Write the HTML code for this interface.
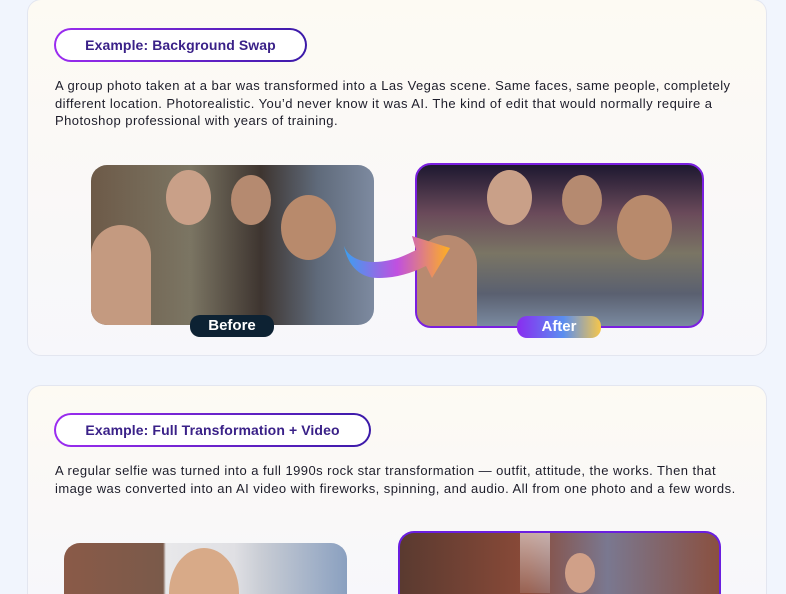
<!DOCTYPE html>
<html><head><meta charset="utf-8"><style>
*{margin:0;padding:0;box-sizing:border-box}
html,body{width:786px;height:594px;overflow:hidden}
body{background:#f1f5fd;font-family:"Liberation Sans",sans-serif;position:relative}
.card{position:absolute;left:27px;width:740px;background:linear-gradient(180deg,#fdfaf3,#f7f7fb);border:1px solid #e3e6f0;border-radius:14px}
.pill{position:absolute;left:26px;height:34px;border-radius:17px;padding:2px;background:linear-gradient(90deg,#9b2cf0,#3b1aa8)}
.pill span{display:block;height:30px;border-radius:15px;background:#fff;color:#3a2188;font-weight:bold;font-size:14px;line-height:30px;text-align:center;letter-spacing:0.1px}
.p{position:absolute;left:27px;font-size:13px;line-height:17.5px;color:#1d1d2a;letter-spacing:0.45px}
.ph{position:absolute;border-radius:16px;overflow:hidden}
.lab{position:absolute;height:22px;border-radius:10px;color:#fff;font-weight:bold;font-size:15px;line-height:22px;text-align:center}
</style></head><body>
<div class="card" style="top:-1px;height:357px">
 <div class="pill" style="top:28px;width:253px"><span>Example: Background Swap</span></div>
 <div class="p" style="top:77px;width:700px">A group photo taken at a bar was transformed into a Las Vegas scene. Same faces, same people, completely different location. Photorealistic. You’d never know it was AI. The kind of edit that would normally require a Photoshop professional with years of training.</div>
</div>
<div class="ph" style="left:91px;top:165px;width:283px;height:160px;background:linear-gradient(90deg,#6d5a48,#7b7563 35%,#3e3530 60%,#5f6a7a 80%,#7d8aa0)">
 <div style="position:absolute;left:0;top:60px;width:60px;height:100px;background:#c49a80;border-radius:30px 30px 0 0"></div>
 <div style="position:absolute;left:75px;top:5px;width:45px;height:55px;background:#c9a088;border-radius:50%"></div>
 <div style="position:absolute;left:140px;top:10px;width:40px;height:50px;background:#b58a70;border-radius:50%"></div>
 <div style="position:absolute;left:190px;top:30px;width:55px;height:65px;background:#b88a6c;border-radius:50%"></div>
</div>
<div class="lab" style="left:190px;top:315px;width:84px;background:#0d2233">Before</div>
<div class="ph" style="left:415px;top:163px;width:289px;height:165px;border:2px solid #7a1fe0;background:linear-gradient(180deg,#1d1830 0%,#6a4a5a 30%,#7a7564 55%,#5a6070 80%,#7a8aa0)">
 <div style="position:absolute;left:0;top:70px;width:60px;height:100px;background:#b88a70;border-radius:30px 30px 0 0"></div>
 <div style="position:absolute;left:70px;top:5px;width:45px;height:55px;background:#c9a088;border-radius:50%"></div>
 <div style="position:absolute;left:145px;top:10px;width:40px;height:50px;background:#b58a70;border-radius:50%"></div>
 <div style="position:absolute;left:200px;top:30px;width:55px;height:65px;background:#b88a6c;border-radius:50%"></div>
</div>
<div class="lab" style="left:517px;top:316px;width:84px;background:linear-gradient(90deg,#8a2cf0,#5a8ef0 55%,#f6c64a)">After</div>
<svg style="position:absolute;left:342px;top:222px" width="115" height="70" viewBox="0 0 115 70"><defs><linearGradient id="g" x1="0" x2="1"><stop offset="0" stop-color="#3aa0f0"/><stop offset=".5" stop-color="#c050e0"/><stop offset="1" stop-color="#ffb020"/></linearGradient></defs><path d="M2 24 C8 40 30 44 56 36 C64 33 70 30 74 28 L70 14 L108 26 L90 56 L84 44 C68 52 52 56 36 56 C18 56 6 44 2 24Z" fill="url(#g)"/></svg>
<div class="card" style="top:385px;height:209px;border-bottom:none;border-radius:14px 14px 0 0">
 <div class="pill" style="top:27px;width:317px"><span>Example: Full Transformation + Video</span></div>
 <div class="p" style="top:76px;width:690px">A regular selfie was turned into a full 1990s rock star transformation — outfit, attitude, the works. Then that image was converted into an AI video with fireworks, spinning, and audio. All from one photo and a few words.</div>
</div>
<div class="ph" style="left:64px;top:543px;width:283px;height:51px;border-radius:16px 16px 0 0;background:linear-gradient(90deg,#8a5a48 0,#7a5a4a 35%,#e8e8ea 36%,#e0e0e4 60%,#c8ccd4 70%,#8aa0c0)">
 <div style="position:absolute;left:105px;top:5px;width:70px;height:90px;background:#d8aa88;border-radius:50%"></div>
</div>
<div class="ph" style="left:398px;top:531px;width:323px;height:63px;border:2px solid #6a1ee0;border-bottom:none;border-radius:16px 16px 0 0;background:linear-gradient(90deg,#5a3a30,#8a4a38 40%,#7a7890 65%,#8a5040)">
 <div style="position:absolute;left:120px;top:0;width:30px;height:60px;background:linear-gradient(#fff8,#fff2)"></div>
 <div style="position:absolute;left:165px;top:20px;width:30px;height:40px;background:#d0a088;border-radius:50%"></div>
</div>
</body></html>
